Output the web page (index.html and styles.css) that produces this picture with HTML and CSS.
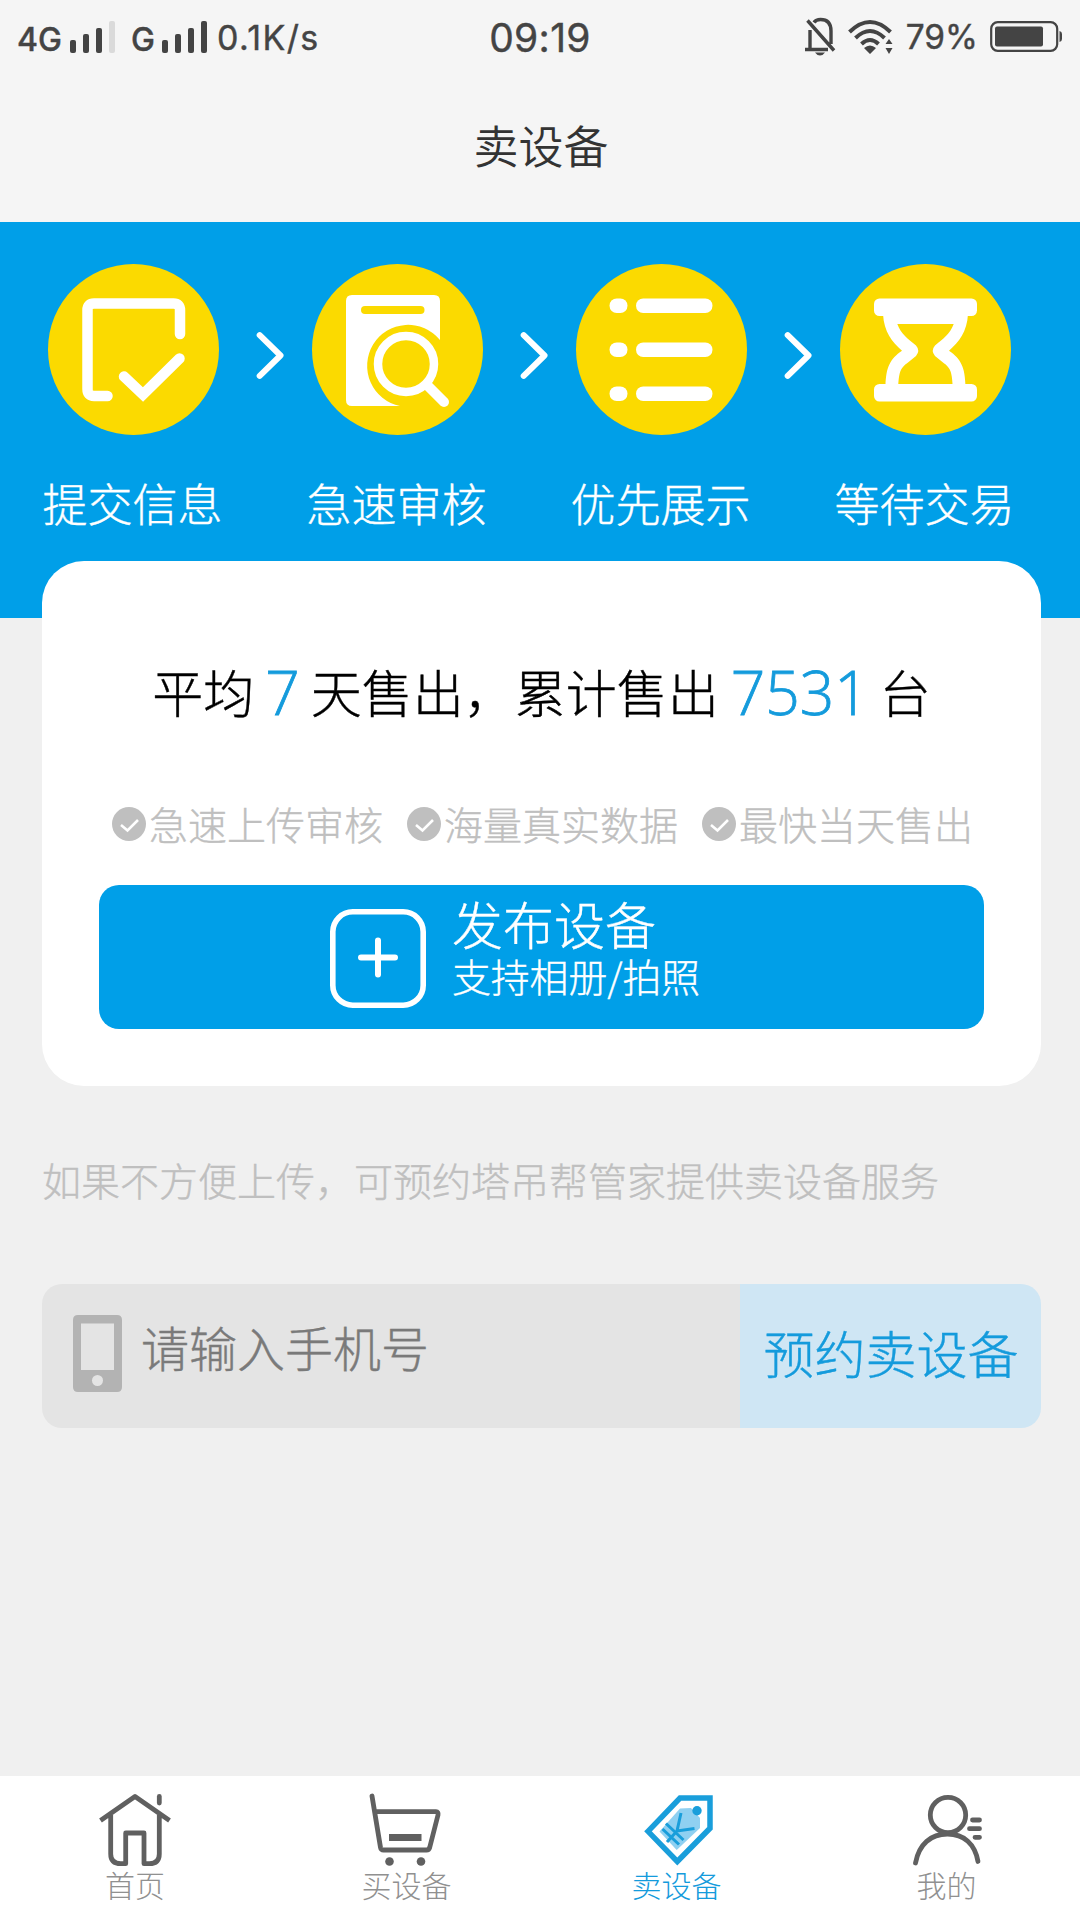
FILE: index.html
```html
<!DOCTYPE html>
<html lang="zh-CN">
<head>
<meta charset="utf-8">
<title>卖设备</title>
<link rel="stylesheet" href="styles.css">
</head>
<body>
<div class="app">
  <header class="header">
    <div class="status">
      <div class="status-left">
        <span class="net net-4g">4G</span>
        <svg class="bars" width="46" height="34" viewBox="0 0 46 34"><g fill="#444"><rect x="0" y="20" width="6" height="13" rx="2"/><rect x="13" y="14" width="6" height="19" rx="2"/><rect x="26" y="8" width="6" height="25" rx="2"/></g><rect x="39" y="1" width="6" height="32" rx="2" fill="#dadada"/></svg>
        <span class="net net-g">G</span>
        <svg class="bars bars-b" width="46" height="34" viewBox="0 0 46 34"><g fill="#444"><rect x="0" y="20" width="6" height="13" rx="2"/><rect x="13" y="14" width="6" height="19" rx="2"/><rect x="26" y="8" width="6" height="25" rx="2"/><rect x="39" y="1" width="6" height="32" rx="2"/></g></svg>
        <span class="speed">0.1K/s</span>
      </div>
      <span class="clock">09:19</span>
      <div class="status-right">
        <svg class="bell" width="32" height="38" viewBox="0 0 32 38" fill="none" stroke="#444" stroke-width="3.4"><path d="M6 12V30M1 31.5H24M3.500 2.500L30 32.500M10 4.500Q12 1.500 16.500 1.500Q27 1.500 27 13V26"/><path d="M11 34.500H21Q19 37.500 16 37.500T11 34.500Z" fill="#444" stroke="none"/></svg>
        <svg class="wifi" width="46" height="36" viewBox="0 0 46 36" fill="none" stroke="#444" stroke-width="4"><path d="M1.500 13Q22 -7 42.500 13M7.500 19Q22 5 36.500 19M13.500 25Q22 17 30.500 25"/><path d="M16 29Q22 24 28 29L22 35ZM37.500 25L41 20L44.500 25ZM37.500 29H44.500L41 35Z" fill="#444" stroke="none"/></svg>
        <span class="percent">79%</span>
        <svg class="battery" width="73" height="32" viewBox="0 0 73 32"><rect x="1.200" y="1.200" width="66" height="28.600" rx="6.500" fill="none" stroke="#444" stroke-width="2.200"/><rect x="5" y="5.500" width="48" height="20" rx="2" fill="#444"/><path d="M69.500 10Q72 10.500 72 13V18Q72 20.500 69.500 21Z" fill="#444"/></svg>
      </div>
    </div>
    <h1 class="title">卖设备</h1>
  </header>

  <section class="hero">
    <div class="step">
      <svg class="disc" viewBox="0 0 171 171"><circle cx="85.500" cy="85.500" r="85.500" fill="#fbda00"/><g fill="none" stroke="#fff" stroke-width="10.500" stroke-linecap="round"><path d="M132 70V46Q132 39.500 125.500 39.500H46Q39.500 39.500 39.500 46V125Q39.500 132 46 132H59.500"/><path d="M76 112.500L95 130.500L131.500 94.500"/></g></svg>
      <span>提交信息</span>
    </div>
    <svg class="arrow" viewBox="0 0 28 48"><path d="M3.700 4.200L24.500 24.500L3.700 44.800"/></svg>
    <div class="step">
      <svg class="disc" viewBox="0 0 171 171"><circle cx="85.500" cy="85.500" r="85.500" fill="#fbda00"/><path d="M40 31H122Q128 31 128 37V76A41 41 0 1 0 88 142H40Q34 142 34 136V37Q34 31 40 31Z" fill="#fff"/><path d="M53 46H108.500" stroke="#fbda00" stroke-width="8" stroke-linecap="round"/><circle cx="94" cy="100" r="28" fill="none" stroke="#fff" stroke-width="8.500"/><path d="M115 121L132 138" stroke="#fff" stroke-width="10" stroke-linecap="round"/></svg>
      <span>急速审核</span>
    </div>
    <svg class="arrow" viewBox="0 0 28 48"><path d="M3.700 4.200L24.500 24.500L3.700 44.800"/></svg>
    <div class="step">
      <svg class="disc" viewBox="0 0 171 171"><circle cx="85.500" cy="85.500" r="85.500" fill="#fbda00"/><g fill="#fff"><rect x="33.500" y="34.500" width="18" height="14.500" rx="7.200"/><rect x="60" y="34.500" width="76.500" height="14.500" rx="7.200"/><rect x="33.500" y="78.500" width="18" height="14.500" rx="7.200"/><rect x="60" y="78.500" width="76.500" height="14.500" rx="7.200"/><rect x="33.500" y="122.500" width="18" height="14.500" rx="7.200"/><rect x="60" y="122.500" width="76.500" height="14.500" rx="7.200"/></g></svg>
      <span>优先展示</span>
    </div>
    <svg class="arrow" viewBox="0 0 28 48"><path d="M3.700 4.200L24.500 24.500L3.700 44.800"/></svg>
    <div class="step">
      <svg class="disc" viewBox="0 0 171 171"><circle cx="85.500" cy="85.500" r="85.500" fill="#fbda00"/><g fill="#fff"><rect x="34" y="34.500" width="103" height="17.500" rx="5.500"/><rect x="34" y="120" width="103" height="17.500" rx="5.500"/><rect x="46" y="48" width="79" height="12"/><path id="glass" d="M43 50C44 68 52 78 62 86.700C50 95 46 103 45.500 122H58.300C59 107 61 103.500 68 98.500L76 92Q80.500 86.700 76 81.500C68 75 61 70 57.300 60V50Z"/><use href="#glass" transform="matrix(-1 0 0 1 171 0)"/></g></svg>
      <span>等待交易</span>
    </div>
  </section>

  <main class="content">
    <section class="card">
      <p class="stats">平均<b class="n7">7</b>天售出，累计售出<b class="nbig">7531</b>台</p>
      <ul class="features">
        <li><svg viewBox="0 0 34 34"><circle cx="17" cy="17" r="17" fill="#bfbfbf"/><path d="M9 18L15.500 23.500L26 13" fill="none" stroke="#fff" stroke-width="2.600"/></svg>急速上传审核</li>
        <li><svg viewBox="0 0 34 34"><circle cx="17" cy="17" r="17" fill="#bfbfbf"/><path d="M9 18L15.500 23.500L26 13" fill="none" stroke="#fff" stroke-width="2.600"/></svg>海量真实数据</li>
        <li><svg viewBox="0 0 34 34"><circle cx="17" cy="17" r="17" fill="#bfbfbf"/><path d="M9 18L15.500 23.500L26 13" fill="none" stroke="#fff" stroke-width="2.600"/></svg>最快当天售出</li>
      </ul>
      <button class="publish">
        <svg width="96" height="99" viewBox="0 0 96 99" fill="none" stroke="#fff" stroke-linecap="round"><rect x="2.800" y="2.800" width="90.400" height="93.400" rx="20" stroke-width="5.600"/><path d="M31 48.500H65M48 31.500V65.500" stroke-width="6"/></svg>
        <span class="publish-text"><span class="publish-main">发布设备</span><span class="publish-sub">支持相册/拍照</span></span>
      </button>
    </section>

    <p class="note">如果不方便上传，可预约塔吊帮管家提供卖设备服务</p>

    <div class="booking">
      <div class="field">
        <svg width="49" height="77" viewBox="0 0 49 77"><path fill="#b3b3b3" fill-rule="evenodd" d="M5 0H44Q49 0 49 5V72Q49 77 44 77H5Q0 77 0 72V5Q0 0 5 0ZM8 8.500V55H41V8.500Z"/><circle cx="24.500" cy="65.500" r="5.500" fill="#e4e4e4"/></svg>
        <span>请输入手机号</span>
      </div>
      <button class="book">预约卖设备</button>
    </div>
  </main>

  <nav class="tabs">
    <a class="tab"><svg viewBox="0 0 72 72"><path d="M1.500 26.500L36 2.500L70.500 26.500M11.700 21V60Q11.700 69.700 21.700 69.700H26.700V39H45V69.700H50.500Q60.300 69.700 60.300 60V21"/><path d="M60.300 2.500V9"  stroke-linecap="round"/></svg><span>首页</span></a>
    <a class="tab"><svg viewBox="0 0 72 72"><path d="M3 2L11.500 53.500Q12 56 14.500 56H57.500Q60 56 60.700 53.500L69 21Q69.500 17.700 67 17.700H6" stroke-linecap="round"/><path d="M20 43.500H52.500" stroke-width="7"/><g fill="#606060" stroke="none"><circle cx="20.500" cy="67.500" r="4.300"/><circle cx="52" cy="67.500" r="4.300"/></g></svg><span class="nudge">买设备</span></a>
    <a class="tab active"><svg viewBox="0 0 72 72"><path d="M9 37.300L41 4H71V34.300L38.300 67.500Z" stroke-width="5.500"/><path d="M20.500 37.500L41 14.500L52 14L61 24V34L37.700 56Z" fill="#8fd0f1" stroke="none"/><circle cx="58" cy="16.700" r="4.700" fill="#199edb" stroke="none"/><path d="M42 19L38 37L55.500 34.500M38 37L28 48M27 29.500L44.500 46M23.500 35L40 50.500" stroke-width="3"/></svg><span class="nudge">卖设备</span></a>
    <a class="tab"><svg viewBox="0 0 72 72" stroke-linecap="round"><circle cx="39" cy="21" r="17.700"/><path d="M6.500 69C10 50 22 40 38.500 40S66 50 69 67.500M63.500 26H70.500M60.500 34.700H70.500M66 43.300H70.500"/></svg><span class="nudge">我的</span></a>
  </nav>
</div>
</body>
</html>
```
FILE: styles.css
```css
* { box-sizing: border-box; }

body {
  margin: 0;
  font-family: "Noto Sans CJK SC", sans-serif;
  font-weight: 300;
  -webkit-text-stroke: 0.4px currentColor;
  background: #f0f0f0;
}

h1, p, ul { margin: 0; padding: 0; font-weight: inherit; }
svg { display: block; flex: none; overflow: visible; }
button { border: 0; padding: 0; font: inherit; -webkit-text-stroke: inherit; }

.app { display: flex; flex-direction: column; width: 1080px; height: 1920px; overflow: hidden; }

/* Header */
.header { height: 222px; background: #f5f5f5; color: #333; }
.status {
  display: grid;
  grid-template-columns: 1fr auto 1fr;
  align-items: center;
  height: 74px;
  padding: 0 17px 0 17px;
  font-family: Inter, sans-serif;
  font-weight: 400;
  color: #444;
}
.status-left, .status-right { display: flex; align-items: center; }
.status-right { justify-content: flex-end; }
.net { font-size: 32px; font-weight: 500; line-height: 40px; padding-top: 6px; }
.net-4g { width: 53px; }
.net-g { width: 31px; margin-left: 15px; }
.speed { margin-left: 9px; font-size: 34px; letter-spacing: 1.4px; }
.clock { font-size: 39px; letter-spacing: 0.3px; }
.wifi { margin-left: 12px; }
.percent { margin: 0 12px 0 12px; font-size: 33.500px; }
.title { text-align: center; font-size: 45px; line-height: 64px; margin: 39px 0 0 2px; font-weight: 350; -webkit-text-stroke: 0; }

/* Steps */
.hero {
  display: flex;
  height: 396px;
  padding: 42px 0 0 42px;
  background: #009fe8;
  color: #fff;
}
.step { display: flex; flex-direction: column; align-items: center; width: 183px; font-size: 45px; line-height: 64px; white-space: nowrap; }
.step span { margin-right: 2px; }
.disc { width: 171px; height: 171px; margin-bottom: 36px; }
.arrow { width: 28px; height: 48px; margin: 67px 22px 0 31px; fill: none; stroke: #fff; stroke-width: 6; stroke-linecap: round; stroke-linejoin: round; }

/* Card */
.content { flex: 1; padding: 0 39px 0 42px; }
.card { display: flex; flex-direction: column; margin-top: -57px; height: 525px; padding: 0 57px; border-radius: 42px; background: #fff; }
.stats { margin-top: 90px; height: 80px; line-height: 80px; font-size: 51px; text-align: center; color: #000; white-space: nowrap; }
.stats b { font: 300 60.500px/70px "Open Sans", sans-serif; vertical-align: -2px; color: #149bdc; -webkit-text-stroke: 0.8px #149bdc; }
.n7 { margin: 0 11px; }
.nbig { margin: 0 11px 0 12px; }
.features { display: flex; gap: 24px; margin: 64px 0 0 13px; list-style: none; color: #bfbfbf; font-size: 39px; line-height: 56px; white-space: nowrap; }
.features li { display: flex; align-items: center; gap: 3px; }
.features svg { width: 34px; height: 34px; margin-top: 2px; }
.publish { display: flex; gap: 26px; margin-top: 34px; height: 144px; padding: 24px 0 0 231px; border-radius: 20px; background: #009fe8; color: #fff; text-align: left; }
.publish-text { display: flex; flex-direction: column; margin-top: -15px; }
.publish-main { font-size: 51px; line-height: 58px; }
.publish-sub { font-size: 38.800px; line-height: 46px; }

.note { margin-top: 65px; color: #bfbfbf; font-size: 39px; line-height: 56px; white-space: nowrap; }

/* Booking */
.booking { display: flex; height: 144px; margin-top: 77px; border-radius: 20px; overflow: hidden; }
.field { display: flex; align-items: flex-start; flex: 1; gap: 19px; padding: 31px 0 0 31px; background: #e4e4e4; color: #7a7a7a; font-size: 48px; line-height: 62px; }
.book { width: 301px; background: #cfe6f4; color: #149bdc; font-size: 51px; line-height: 70px; padding: 0 0 8px 1px; white-space: nowrap; }

/* Tabs */
.tabs { display: flex; height: 144px; background: #fff; -webkit-text-stroke: 0; }
.tab { display: flex; flex-direction: column; align-items: center; flex: 1; padding-top: 18px; font-size: 30px; line-height: 36px; color: #909090; }
.tab svg { width: 72px; height: 72px; fill: none; stroke: #606060; stroke-width: 4.8; stroke-linejoin: round; }
.nudge { margin-left: 3px; }
.tab.active { color: #149bdc; }
.tab.active svg { stroke: #199edb; stroke-linejoin: miter; }
```
